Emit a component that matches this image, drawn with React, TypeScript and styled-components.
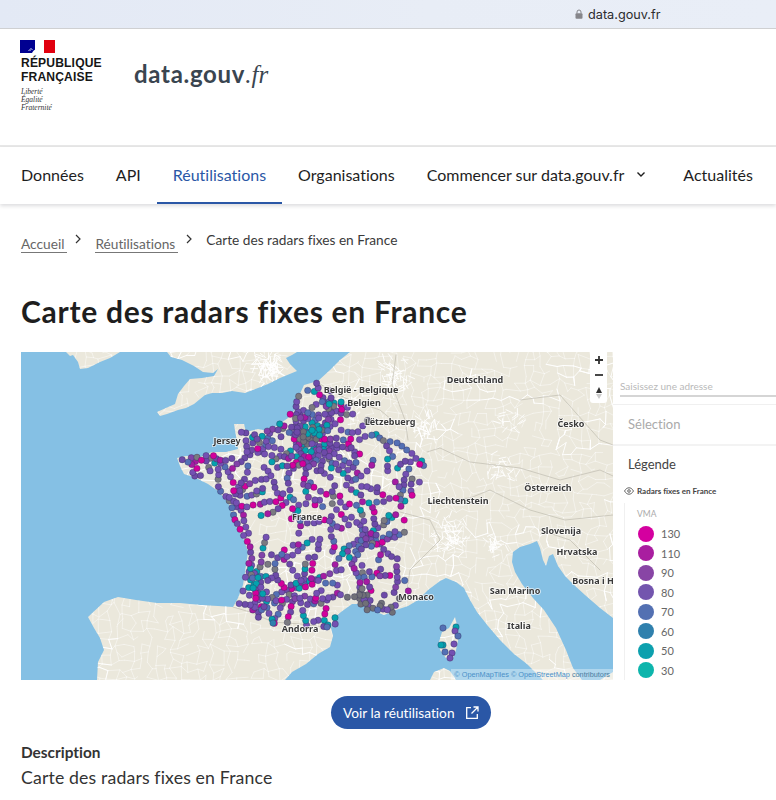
import React from 'react'
import styled, { createGlobalStyle } from 'styled-components'

const GlobalStyle = createGlobalStyle`
  html, body {
    margin: 0;
    padding: 0;
    background: #fff;
    font-family: Lato, 'Liberation Sans', sans-serif;
    font-variant-ligatures: none;
    color: #1e1e1e;
  }
`
const Page = styled.div`
  width: 776px;
  height: 800px;
  overflow: hidden;
`
const BrowserBar = styled.div`
  height: 28px;
  box-sizing: content-box;
  background: linear-gradient(90deg, #e3e9f5 0%, #e8edf6 55%, #e9eef7 100%);
  border-bottom: 1px solid #cfd0d2;
  display: flex;
  align-items: center;
  gap: 5px;
  padding-left: 575px;
`
const Url = styled.span`
  font-family: Inter, sans-serif;
  font-size: 12.7px;
  color: #2c2c2e;
`
const Header = styled.header`
  height: 116px;
  display: flex;
  align-items: flex-start;
  border-bottom: 2px solid #e8e8e8;
`
const Brand = styled.div`
  margin: 11px 0 0 20px;
  width: 114px;
`
const BrandName = styled.div`
  margin: 2px 0 0 1px;
  font-family: 'Liberation Sans', sans-serif;
  font-weight: 700;
  font-size: 12.1px;
  line-height: 14px;
  color: #161616;
  letter-spacing: 0.15px;
`
const Motto = styled.div`
  margin: 4px 0 0 1px;
  font-family: 'Liberation Serif', serif;
  font-style: italic;
  font-size: 7.5px;
  line-height: 8px;
  color: #333;
`
const SiteName = styled.div`
  margin-top: 29px;
  font-family: Lato, sans-serif;
  font-weight: 700;
  font-size: 24px;
  line-height: 32px;
  letter-spacing: 0.7px;
  color: #3a4550;
  & > em {
    font-family: 'Liberation Serif', serif;
    font-weight: 400;
    font-style: italic;
    letter-spacing: 0;
    font-size: 25px;
  }
`
const Nav = styled.nav`
  height: 57px;
  padding-left: 5px;
  display: flex;
  box-shadow: 0 2px 4px rgba(0, 0, 20, 0.14);
`
const NavItem = styled.div<{ $active?: boolean }>`
  padding: 0 16px 3px;
  display: flex;
  align-items: center;
  gap: 11px;
  font-size: 16px;
  white-space: nowrap;
  color: ${(p) => (p.$active ? '#2a57a6' : '#1e1e1e')};
  box-shadow: ${(p) => (p.$active ? 'inset 0 -2px 0 #2a57a6' : 'none')};
  & > svg {
    margin-right: 4px;
  }
`
const Breadcrumb = styled.div`
  margin-top: 25px;
  padding-left: 21px;
  height: 24px;
  display: flex;
  align-items: flex-start;
  font-size: 13.7px;
  color: #3a3a3a;
`
const Crumb = styled.span`
  display: inline-block;
  margin-top: 7px;
  padding-right: 3px;
  line-height: 16px;
  color: #666;
  border-bottom: 1px solid #777;
`
const CrumbSeparator = styled.span`
  width: 28px;
  flex: none;
  display: flex;
  justify-content: center;
  padding-top: 5px;
  margin-left: -3px;
  margin-right: 3px;
`
const CurrentCrumb = styled.span`
  line-height: 16px;
  margin-top: 3px;
`
const Title = styled.h1`
  margin: 38px 0 0 21px;
  font-family: Lato, sans-serif;
  font-size: 30px;
  line-height: 40px;
  font-weight: 700;
  letter-spacing: 0.72px;
  color: #1e1e1e;
`
const Embed = styled.div`
  margin: 21px 0 0 21px;
  height: 328px;
  display: flex;
`
const MapFrame = styled.div`
  position: relative;
  width: 592px;
  height: 328px;
  flex: none;
  overflow: hidden;
  & > svg {
    display: block;
    filter: blur(0.35px);
  }
`
const MapControls = styled.div`
  position: absolute;
  top: 0;
  right: 6px;
  width: 17px;
  height: 51px;
  background: #fff;
  border-radius: 0 0 3px 3px;
  display: flex;
  flex-direction: column;
  align-items: center;
  justify-content: space-around;
  & > svg {
    display: block;
  }
`
const Attribution = styled.div`
  position: absolute;
  right: 0;
  bottom: 0;
  height: 11px;
  padding: 0 3px;
  background: rgba(255, 255, 255, 0.35);
  font-family: 'Liberation Sans', sans-serif;
  font-size: 7.3px;
  line-height: 11px;
  color: #4a90c8;
  white-space: nowrap;
  & > span {
    color: #4b7d9f;
  }
`
const Panel = styled.aside`
  flex: 1;
  min-width: 0;
  font-family: Lato, sans-serif;
  overflow: hidden;
`
const SearchBlock = styled.div`
  height: 53px;
  box-sizing: border-box;
  padding: 27px 0 0 7px;
  border-bottom: 1px solid #f0f0f0;
`
const SearchLabel = styled.div`
  height: 18px;
  box-sizing: border-box;
  font-size: 10px;
  line-height: 14px;
  color: #b9b9b9;
  border-bottom: 2px solid #d5d5d5;
`
const SelectionBlock = styled.div`
  height: 39px;
  padding-left: 15px;
  font-size: 13px;
  line-height: 38px;
  color: #aaa;
  border-bottom: 2px solid #f3f3f3;
`
const LegendBlock = styled.div`
  padding: 10px 0 0 11px;
`
const LegendTitle = styled.div`
  padding-left: 4px;
  font-size: 13px;
  line-height: 16px;
  color: #444;
`
const LayerName = styled.div`
  margin-top: 14px;
  display: flex;
  align-items: center;
  gap: 3px;
  font-size: 8px;
  line-height: 10px;
  font-weight: 700;
  color: #444;
`
const LegendList = styled.div`
  margin-top: 7px;
  padding: 6px 0 0 11px;
  border-left: 1px solid #f0f0f0;
  height: 180px;
`
const VmaLabel = styled.div`
  margin-left: 1px;
  font-size: 8.5px;
  line-height: 10px;
  color: #aaa;
  margin-bottom: 5px;
`
const LegendRow = styled.div`
  height: 19.5px;
  display: flex;
  align-items: center;
  gap: 7px;
  font-size: 11px;
  color: #666;
`
const Swatch = styled.span<{ $color: string }>`
  width: 16px;
  height: 16px;
  margin-left: 2px;
  border-radius: 50%;
  background: ${(p) => p.$color};
  flex: none;
`
const ButtonRow = styled.div`
  margin-top: 16px;
  display: flex;
  justify-content: center;
  padding-left: 46px;
  width: 730px;
`
const ActionButton = styled.a`
  height: 33px;
  width: 160px;
  box-sizing: border-box;
  padding-left: 12px;
  border-radius: 17px;
  background: #2a57a6;
  color: #fff;
  font-size: 13.7px;
  display: flex;
  align-items: center;
  gap: 10px;
`
const SectionLabel = styled.div`
  margin: 14px 0 0 21px;
  font-weight: 700;
  font-size: 15.4px;
  line-height: 18px;
  color: #333;
`
const SectionText = styled.div`
  margin: 6px 0 0 21px;
  font-size: 17.7px;
  letter-spacing: 0.14px;
  line-height: 22px;
  color: #333;
`

// seeded random so that the map is the same on every load
function makeRandom(seed: number) {
  let s = seed
  return () => {
    s = (s * 1664525 + 1013904223) % 4294967296
    return s / 4294967296
  }
}

type Pt = [number, number]

const toPath = (pts: Pt[]) => 'M' + pts.map((p) => p.join(' ')).join('L') + 'Z'

const IRELAND: Pt[] = [[66, 352], [70, 356], [73, 355], [78, 362], [80, 369], [88, 368], [100, 362], [110, 358], [120, 352]]
const BRITAIN: Pt[] = [
  [167, 352], [171, 357], [182, 360], [194, 366], [203, 372], [213, 373], [218, 369], [214, 376], [202, 378], [190, 379],
  [184, 386], [178, 394], [175, 404], [166, 408], [157, 412], [160, 416], [167, 414], [178, 410], [186, 408], [194, 404],
  [205, 395], [212, 393], [222, 393], [232, 391], [245, 393], [258, 388], [268, 384], [280, 378], [297, 371], [290, 364],
  [286, 358], [292, 355], [297, 352],
]
const CONTINENT: Pt[] = [
  [350, 352], [340, 360], [330, 370], [318, 381], [304, 385], [298, 398], [296, 408], [288, 418], [278, 425], [268, 431],
  [258, 429], [246, 432], [244, 424], [234, 424], [236, 436], [238, 449], [226, 452], [212, 452], [200, 457], [186, 456],
  [177, 458], [180, 466], [184, 474], [196, 478], [208, 484], [218, 491], [228, 502], [232, 514], [236, 526], [244, 540],
  [248, 552], [246, 566], [243, 585], [238, 598], [233, 607], [218, 606], [200, 605], [180, 603], [157, 603], [136, 600],
  [118, 597], [104, 602], [88, 617], [94, 628], [100, 638], [104, 650], [98, 662], [97, 680], [285, 680], [292, 672],
  [306, 664], [318, 654], [330, 647], [333, 636], [331, 628], [334, 618], [341, 612], [352, 604], [364, 604], [374, 611],
  [384, 615], [396, 610], [408, 606], [418, 600], [428, 590], [440, 581], [446, 578], [456, 582], [464, 588], [470, 600],
  [477, 612], [488, 626], [500, 640], [514, 654], [527, 664], [543, 680], [613, 680], [613, 352],
]
const ADRIATIC: Pt[] = [
  [513, 552], [520, 547], [530, 544], [537, 541], [540, 548], [543, 560], [546, 566], [549, 556], [553, 554], [558, 566],
  [565, 576], [573, 584], [585, 595], [600, 608], [613, 618], [613, 672], [600, 680], [582, 680], [573, 668], [566, 650],
  [556, 628], [544, 610], [533, 598], [522, 584], [515, 572], [512, 562],
]
const CORSICA: Pt[] = [[455, 617], [457, 625], [459, 636], [456, 650], [452, 661], [446, 658], [440, 650], [439, 642], [442, 632], [449, 628]]
const SARDINIA: Pt[] = [[430, 680], [434, 672], [444, 668], [450, 671], [456, 680]]
const FRANCE: Pt[] = [
  [317, 381], [332, 392], [347, 405], [363, 418], [376, 423], [390, 431], [408, 438], [429, 452], [422, 470], [419, 487],
  [406, 503], [402, 512], [409, 537], [400, 553], [399, 567], [409, 590], [392, 617], [376, 614], [363, 608], [345, 608],
  [338, 618], [334, 630], [300, 624], [273, 625], [250, 614], [235, 609], [243, 585], [246, 552], [230, 514], [213, 490],
  [178, 468], [178, 458], [212, 453], [235, 450], [235, 425], [248, 434], [270, 430], [288, 418], [296, 400], [302, 385],
]

const inPolygon = (x: number, y: number, poly: Pt[]) => {
  let inside = false
  for (let i = 0, j = poly.length - 1; i < poly.length; j = i++) {
    const [xi, yi] = poly[i]
    const [xj, yj] = poly[j]
    if (yi > y !== yj > y && x < ((xj - xi) * (y - yi)) / (yj - yi) + xi) inside = !inside
  }
  return inside
}

function buildRoads() {
  const rand = makeRandom(77)
  const step = 8
  const thin: string[] = []
  const thick: string[] = []
  const rows = 42
  const cols = 76
  const nodes: Pt[][] = []
  for (let r = 0; r <= rows; r++) {
    nodes[r] = []
    for (let c = 0; c <= cols; c++) {
      nodes[r][c] = [21 + c * step + (rand() - 0.5) * 7, 350 + r * step + (rand() - 0.5) * 7]
    }
  }
  const seg = (a: Pt, b: Pt) => `M${a[0].toFixed(1)} ${a[1].toFixed(1)}L${b[0].toFixed(1)} ${b[1].toFixed(1)}`
  for (let r = 0; r <= rows; r++) {
    for (let c = 0; c <= cols; c++) {
      if (c < cols && rand() < 0.65) thin.push(seg(nodes[r][c], nodes[r][c + 1]))
      if (r < rows && rand() < 0.65) thin.push(seg(nodes[r][c], nodes[r + 1][c]))
    }
  }
  // long motorways wander across the mesh
  for (let i = 0; i < 60; i++) {
    let r = Math.floor(rand() * rows)
    let c = Math.floor(rand() * cols)
    for (let j = 0; j < 14; j++) {
      const horizontal = rand() < 0.5
      const nr = Math.min(rows, Math.max(0, r + (horizontal ? 0 : rand() < 0.5 ? 1 : -1)))
      const nc = Math.min(cols, Math.max(0, c + (horizontal ? 1 : 0)))
      thick.push(seg(nodes[r][c], nodes[nr][nc]))
      r = nr
      c = nc
    }
  }
  // big cities get a denser tangle of small roads
  const cities: [number, number, number, number][] = [
    [268, 368, 70, 14], [345, 408, 40, 18], [395, 375, 50, 20], [425, 425, 30, 16], [500, 470, 24, 18],
    [450, 535, 70, 20], [495, 545, 20, 12], [510, 420, 16, 16],
  ]
  cities.forEach(([x, y, count, spread]) => {
    for (let i = 0; i < count; i++) {
      const px = x + (rand() + rand() - 1) * spread
      const py = y + (rand() + rand() - 1) * spread
      const a = rand() * Math.PI * 2
      thick.push(seg([px, py], [px + Math.cos(a) * 7, py + Math.sin(a) * 7]))
    }
  })
  return { thin: thin.join(''), thick: thick.join('') }
}

const BORDERS = [
  'M233 607L250 612L273 622L300 624L332 628',
  'M427 452L440 448L470 462L520 468L560 480L600 470L613 476',
  'M396 355L392 385L405 420L408 440',
  'M318 383L345 398L380 410L392 420',
  'M445 500L470 498L490 490L530 510L565 520L613 515',
  'M400 512L430 520L440 540L410 570L407 590',
  'M520 400L560 395L600 440L613 445',
  'M540 530L570 540L600 570',
]

const DOT_COLORS = [
  '#7450b2', '#7450b2', '#7450b2', '#7450b2', '#7450b2', '#6d4aa8', '#6d4aa8', '#6d4aa8', '#8143a8', '#5470b4', '#5470b4',
  '#d3009c', '#d3009c', '#a51ba2', '#04a2ae', '#7a7a80',
]

type Dot = { x: number; y: number; fill: string }

function buildDots() {
  const rand = makeRandom(2024)
  const dots: Dot[] = []
  const hubs: [number, number, number, number][] = [
    [313, 440, 36, 24], [330, 405, 12, 20], [367, 538, 14, 22], [297, 593, 12, 20], [250, 578, 8, 14],
    [237, 497, 8, 16], [417, 470, 10, 24], [370, 600, 10, 26], [255, 445, 8, 24], [205, 470, 10, 25],
    [265, 605, 8, 18],
  ]
  const pickColor = (x: number, y: number) => {
    const nearParis = Math.hypot(x - 313, y - 440) < 16
    if (nearParis && rand() < 0.6) return rand() < 0.55 ? '#04a2ae' : '#707078'
    const nearSouth = y > 590 && x > 340
    if (nearSouth && rand() < 0.35) return '#707078'
    const nearBordeaux = Math.hypot(x - 248, y - 578) < 12
    if (nearBordeaux && rand() < 0.4) return '#04a2ae'
    return DOT_COLORS[Math.floor(rand() * DOT_COLORS.length)]
  }
  const crowded = (x: number, y: number, near: number) => dots.some((d) => Math.hypot(d.x - x, d.y - y) < near)
  const walk = (sx: number, sy: number, len: number, near: number) => {
    let x = sx
    let y = sy
    let a = rand() * Math.PI * 2
    for (let i = 0; i < len; i++) {
      if (!inPolygon(x, y, FRANCE)) return
      if (!crowded(x, y, near)) dots.push({ x, y, fill: pickColor(x, y) })
      a += (rand() - 0.5) * 0.9
      const d = 4.5 + rand() * 3
      x += Math.cos(a) * d
      y += Math.sin(a) * d
    }
  }
  hubs.forEach(([hx, hy, count, spread]) => {
    for (let i = 0; i < count; i++) {
      walk(hx + (rand() - 0.5) * spread, hy + (rand() - 0.5) * spread, 4 + Math.floor(rand() * 6), 2.6)
    }
  })
  // the rest of the country: chains that keep a little apart so land shows between them
  for (let i = 0; i < 460; i++) {
    const sx = 178 + rand() * 252
    const sy = 383 + rand() * 246
    if (!crowded(sx, sy, 7)) walk(sx, sy, 3 + Math.floor(rand() * 6), 3.8)
  }
  const extras: Dot[] = [
    { x: 443, y: 628, fill: '#5470b4' }, { x: 456, y: 627, fill: '#04a2ae' }, { x: 455, y: 631, fill: '#7450b2' },
    { x: 458, y: 636, fill: '#5470b4' }, { x: 443, y: 645, fill: '#04a2ae' }, { x: 441, y: 645, fill: '#04a2ae' },
    { x: 454, y: 644, fill: '#7450b2' }, { x: 445, y: 652, fill: '#5470b4' }, { x: 452, y: 653, fill: '#7450b2' },
    { x: 450, y: 658, fill: '#7450b2' }, { x: 273, y: 623, fill: '#2f80ad' }, { x: 328, y: 625, fill: '#04a2ae' },
    { x: 327, y: 627, fill: '#5470b4' },
  ]
  return dots.concat(extras)
}

const ROADS = buildRoads()
const DOTS = buildDots()

const LABELS: [string, number, number][] = [
  ['Deutschland', 475, 380], ['België - Belgique', 361, 390], ['Belgien', 364, 403], ['Lëtzebuerg', 390, 422],
  ['Jersey', 227, 441], ['France', 307, 517], ['Monaco', 416, 597], ['Andorra', 300, 629], ['Česko', 571, 424],
  ['Österreich', 548, 488], ['Liechtenstein', 458, 501], ['Slovenija', 561, 531], ['Hrvatska', 577, 552],
  ['Bosna i H', 593, 581], ['San Marino', 515, 591], ['Italia', 519, 626],
]

const LEGEND: [string, string][] = [
  ['130', '#d4009f'], ['110', '#a91ea0'], ['90', '#8845a5'], ['80', '#7355ae'],
  ['70', '#5370b2'], ['60', '#2f80ad'], ['50', '#0ca0ae'], ['30', '#0db5ac'],
]

function RadarMap() {
  const land = [IRELAND, BRITAIN, CONTINENT, CORSICA, SARDINIA].map(toPath).join('')
  return (
    <svg width="592" height="328" viewBox="21 352 592 328">
      <defs>
        <clipPath id="land">
          <path d={land} />
        </clipPath>
      </defs>
      <rect x="21" y="352" width="592" height="328" fill="#85c0e4" />
      <path d={land} fill="#ebe8dc" />
      <g clipPath="url(#land)" fill="none" strokeLinecap="round">
        <path d={ROADS.thin} stroke="#fff" strokeWidth="0.6" opacity="0.75" />
        <path d={ROADS.thick} stroke="#fff" strokeWidth="1" opacity="0.9" />
        <path d={BORDERS.join('')} stroke="#b9b6aa" strokeWidth="0.6" />
      </g>
      <path d={toPath(ADRIATIC)} fill="#85c0e4" />
      <g stroke="#2d2a55" strokeOpacity="0.5" strokeWidth="0.7">
        {DOTS.map((d, i) => (
          <circle key={i} cx={d.x.toFixed(1)} cy={d.y.toFixed(1)} r="3.2" fill={d.fill} />
        ))}
      </g>
      <g
        fontFamily="'Noto Sans', sans-serif"
        fontWeight="700"
        fontSize="9"
        fill="#3a3a3a"
        stroke="#ffffff"
        strokeOpacity="0.8"
        strokeWidth="1.6"
        paintOrder="stroke"
        textAnchor="middle"
      >
        {LABELS.map(([name, x, y]) => (
          <text key={name} x={x} y={y + 3}>
            {name}
          </text>
        ))}
      </g>
    </svg>
  )
}

function LockIcon() {
  return (
    <svg width="8" height="10" viewBox="0 0 8 10">
      <path d="M2 4.5V3a2 2 0 0 1 4 0v1.5" fill="none" stroke="#86868b" strokeWidth="1" />
      <rect x="0.5" y="4.2" width="7" height="5.6" rx="1" fill="#86868b" />
    </svg>
  )
}

function Flag() {
  return (
    <svg width="35" height="14" viewBox="0 0 35 14" style={{ display: 'block' }}>
      <rect width="15" height="13" fill="#000091" />
      <rect x="24" width="11" height="13" fill="#e1000f" />
      <path d="M12 13c1-1.800 2-2.800 3.500-3.400 1-1.200 1.300-2.300 1.200-3.600C16.800 3 18.800 0.400 21 0.400c1.500 0 2.500.7 3 1.600v11z" fill="#fff" />
      <path d="M9 9.500h4M8 10.500h3M10 8.500h2" stroke="#cdd3ee" strokeWidth="0.5" />
    </svg>
  )
}

function Chevron({ small }: { small?: boolean }) {
  return small ? (
    <svg width="10" height="10" viewBox="0 0 10 10" fill="none" stroke="#333" strokeWidth="1.2">
      <path d="M3 1l4 4-4 4" />
    </svg>
  ) : (
    <svg width="12" height="12" viewBox="0 0 12 12" fill="none" stroke="#1e1e1e" strokeWidth="1.4">
      <path d="M2.500 4.500L6 8l3.500-3.500" />
    </svg>
  )
}

function ExternalIcon() {
  return (
    <svg width="14" height="14" viewBox="0 0 14 14" fill="none" stroke="#fff" strokeWidth="1.3">
      <path d="M6 1.700H1.700v10.600h10.600V8M8.500 1H13v4.500M13 1L6.500 7.500" />
    </svg>
  )
}

function EyeIcon() {
  return (
    <svg width="10" height="8" viewBox="0 0 10 8" fill="none" stroke="#555" strokeWidth="0.9">
      <path d="M0.500 4C2 1.500 3.500 0.800 5 0.800S8 1.500 9.500 4C8 6.500 6.500 7.200 5 7.200S2 6.500 0.500 4z" />
      <circle cx="5" cy="4" r="1.300" />
    </svg>
  )
}

export default function App() {
  return (
    <Page>
      <GlobalStyle />
      <BrowserBar>
        <LockIcon />
        <Url>data.gouv.fr</Url>
      </BrowserBar>
      <Header>
        <Brand>
          <Flag />
          <BrandName>
            RÉPUBLIQUE
            <br />
            FRANÇAISE
          </BrandName>
          <Motto>
            Liberté
            <br />
            Égalité
            <br />
            Fraternité
          </Motto>
        </Brand>
        <SiteName>
          data.gouv<em>.fr</em>
        </SiteName>
      </Header>
      <Nav>
        <NavItem>Données</NavItem>
        <NavItem>API</NavItem>
        <NavItem $active>Réutilisations</NavItem>
        <NavItem>Organisations</NavItem>
        <NavItem>
          Commencer sur data.gouv.fr
          <Chevron />
        </NavItem>
        <NavItem>Actualités</NavItem>
      </Nav>
      <Breadcrumb>
        <Crumb>Accueil</Crumb>
        <CrumbSeparator>
          <Chevron small />
        </CrumbSeparator>
        <Crumb>Réutilisations</Crumb>
        <CrumbSeparator>
          <Chevron small />
        </CrumbSeparator>
        <CurrentCrumb>Carte des radars fixes en France</CurrentCrumb>
      </Breadcrumb>
      <Title>Carte des radars fixes en France</Title>
      <Embed>
        <MapFrame>
          <RadarMap />
          <MapControls>
            <svg width="10" height="10" viewBox="0 0 10 10">
              <path d="M5 1v8M1 5h8" stroke="#333" strokeWidth="1.800" />
            </svg>
            <svg width="10" height="10" viewBox="0 0 10 10">
              <path d="M1 5h8" stroke="#333" strokeWidth="1.800" />
            </svg>
            <svg width="8" height="14" viewBox="0 0 8 14">
              <path d="M4 1l3 6H1z" fill="#333" />
              <path d="M4 13l3-5H1z" fill="#ccc" />
            </svg>
          </MapControls>
          <Attribution>
            © OpenMapTiles © OpenStreetMap <span>contributors</span>
          </Attribution>
        </MapFrame>
        <Panel>
          <SearchBlock>
            <SearchLabel>Saisissez une adresse</SearchLabel>
          </SearchBlock>
          <SelectionBlock>Sélection</SelectionBlock>
          <LegendBlock>
            <LegendTitle>Légende</LegendTitle>
            <LayerName>
              <EyeIcon />
              Radars fixes en France
            </LayerName>
            <LegendList>
              <VmaLabel>VMA</VmaLabel>
              {LEGEND.map(([value, color]) => (
                <LegendRow key={value}>
                  <Swatch $color={color} />
                  {value}
                </LegendRow>
              ))}
            </LegendList>
          </LegendBlock>
        </Panel>
      </Embed>
      <ButtonRow>
        <ActionButton>
          Voir la réutilisation
          <ExternalIcon />
        </ActionButton>
      </ButtonRow>
      <SectionLabel>Description</SectionLabel>
      <SectionText>Carte des radars fixes en France</SectionText>
    </Page>
  )
}
